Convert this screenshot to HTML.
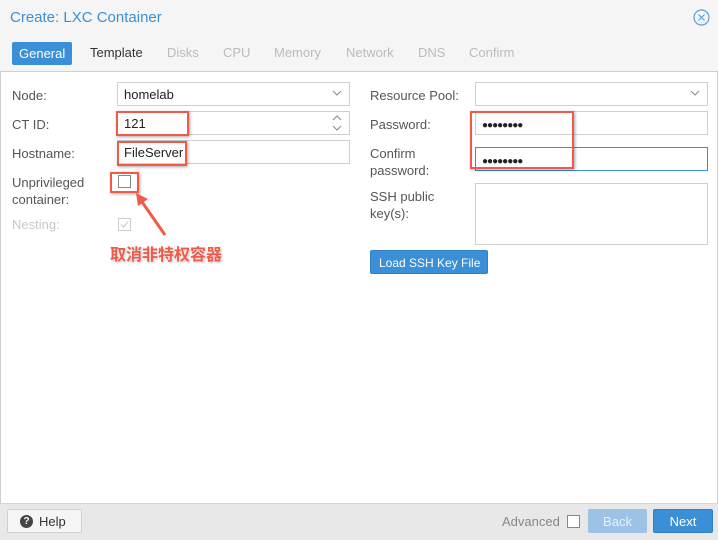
<!DOCTYPE html>
<html><head><style>
*{box-sizing:border-box;margin:0;padding:0}
body{width:718px;height:540px;background:#f5f5f5;font-family:"Liberation Sans",sans-serif;font-size:13px;color:#444;position:relative;overflow:hidden}
.a{position:absolute}
.lbl{position:absolute;color:#555;font-size:13px;line-height:17px}
.inp{position:absolute;background:#fff;border:1px solid #cfcfcf;height:24px;font-size:13px;color:#222;padding:4px 6px;line-height:15px}
.red{position:absolute;border:2px solid #f05a4a;box-shadow:1px 1px 3px rgba(0,0,0,.35)}
.tab{position:absolute;top:45px;font-size:13px;color:#bbb}
</style></head><body>
<div class="a" style="left:10px;top:9px;font-size:15px;color:#3b8fd6">Create: LXC Container</div>
<svg class="a" style="left:693px;top:9px" width="17" height="17" viewBox="0 0 17 17"><circle cx="8.5" cy="8.5" r="7.5" fill="none" stroke="#5a9fdc" stroke-width="1.2"/><path d="M5.5 5.5L11.5 11.5M11.5 5.5L5.5 11.5" stroke="#5a9fdc" stroke-width="1.2"/></svg>
<div class="a" style="left:12px;top:42px;width:60px;height:23px;background:#3b8fd6;border-radius:2px;color:#fff;padding:4px 0 0 7px">General</div>
<div class="tab" style="left:90px;color:#333">Template</div>
<div class="tab" style="left:167px">Disks</div>
<div class="tab" style="left:223px">CPU</div>
<div class="tab" style="left:274px">Memory</div>
<div class="tab" style="left:346px">Network</div>
<div class="tab" style="left:418px">DNS</div>
<div class="tab" style="left:469px">Confirm</div>
<div class="a" style="left:0;top:71px;width:718px;height:432px;background:#fff;border-top:1px solid #cfcfcf;border-left:1px solid #cfcfcf;border-right:1px solid #cfcfcf"></div>

<div class="lbl" style="left:12px;top:87px">Node:</div>
<div class="inp" style="left:117px;top:82px;width:233px">homelab</div>
<svg class="a" style="left:332px;top:90px" width="10" height="7"><path d="M1 1L5 5L9 1" fill="none" stroke="#888"/></svg>
<div class="lbl" style="left:12px;top:116px">CT ID:</div>
<div class="inp" style="left:117px;top:111px;width:233px">121</div>
<svg class="a" style="left:332px;top:114px" width="10" height="18"><path d="M1 6L5 2L9 6M1 12L5 16L9 12" fill="none" stroke="#888"/></svg>
<div class="red" style="left:116px;top:111px;width:73px;height:25px"></div>
<div class="lbl" style="left:12px;top:145px">Hostname:</div>
<div class="inp" style="left:117px;top:140px;width:233px">FileServer</div>
<div class="red" style="left:117px;top:141px;width:70px;height:25px"></div>
<div class="lbl" style="left:12px;top:174px">Unprivileged<br>container:</div>
<div class="a" style="left:118px;top:175px;width:13px;height:13px;border:1px solid #888;background:#fff"></div>
<div class="red" style="left:110px;top:172px;width:29px;height:21px"></div>
<div class="lbl" style="left:12px;top:216px;color:#c8c8c8">Nesting:</div>
<svg class="a" style="left:118px;top:218px" width="13" height="13"><rect x=".5" y=".5" width="12" height="12" fill="none" stroke="#ccc"/><path d="M3 6.5L5.5 9L10 3.5" fill="none" stroke="#ccc" stroke-width="1.2"/></svg>
<svg class="a" style="left:130px;top:190px" width="45" height="50"><path d="M35 45L10 9" stroke="#f05a4a" stroke-width="3"/><path d="M6 3L18 9L8 16Z" fill="#f05a4a"/></svg>
<div class="a" style="left:110px;top:244px;font-family:'Noto Sans CJK SC',sans-serif;font-weight:bold;font-size:16px;line-height:18px;color:#f05a4a;text-shadow:0 0 2px #fff,1px 1px 2px rgba(0,0,0,.3)">取消非特权容器</div>

<div class="lbl" style="left:370px;top:87px">Resource Pool:</div>
<div class="inp" style="left:475px;top:82px;width:233px"></div>
<svg class="a" style="left:690px;top:90px" width="10" height="7"><path d="M1 1L5 5L9 1" fill="none" stroke="#888"/></svg>
<div class="lbl" style="left:370px;top:116px">Password:</div>
<div class="inp" style="left:475px;top:111px;width:233px;font-size:10px;letter-spacing:-1px;padding-top:6px">●●●●●●●●</div>
<div class="lbl" style="left:370px;top:145px">Confirm<br>password:</div>
<div class="inp" style="left:475px;top:147px;width:233px;border-color:#3b8fd6;font-size:10px;letter-spacing:-1px;padding-top:6px">●●●●●●●●</div>
<div class="red" style="left:470px;top:111px;width:104px;height:58px"></div>
<div class="lbl" style="left:370px;top:188px">SSH public<br>key(s):</div>
<div class="inp" style="left:475px;top:183px;width:233px;height:62px"></div>
<div class="a" style="left:370px;top:250px;width:118px;height:24px;background:#3b8fd6;border:1px solid #2f7fc4;border-radius:2px;color:#fff;padding:5px 0 0 8px;font-size:12px">Load SSH Key File</div>

<div class="a" style="left:0;top:503px;width:718px;height:37px;background:#e8e8e8;border-top:1px solid #d5d5d5"></div>
<div class="a" style="left:7px;top:509px;width:75px;height:24px;background:#f5f5f5;border:1px solid #d0d0d0;border-radius:2px;padding-left:12px;color:#333;display:flex;align-items:center"><span style="display:inline-block;width:13px;height:13px;border-radius:50%;background:#444;color:#fff;font-size:10px;font-weight:bold;text-align:center;line-height:13px;margin-right:6px">?</span>Help</div>
<div class="a" style="left:502px;top:514px;color:#888">Advanced</div>
<div class="a" style="left:567px;top:515px;width:13px;height:13px;border:1px solid #888;background:#fff"></div>
<div class="a" style="left:588px;top:509px;width:59px;height:24px;background:#9cc3e6;border-radius:2px;color:#e8f0f8;text-align:center;padding-top:5px">Back</div>
<div class="a" style="left:653px;top:509px;width:60px;height:24px;background:#3b8fd6;border:1px solid #2f7fc4;border-radius:2px;color:#fff;text-align:center;padding-top:4px">Next</div>
</body></html>
